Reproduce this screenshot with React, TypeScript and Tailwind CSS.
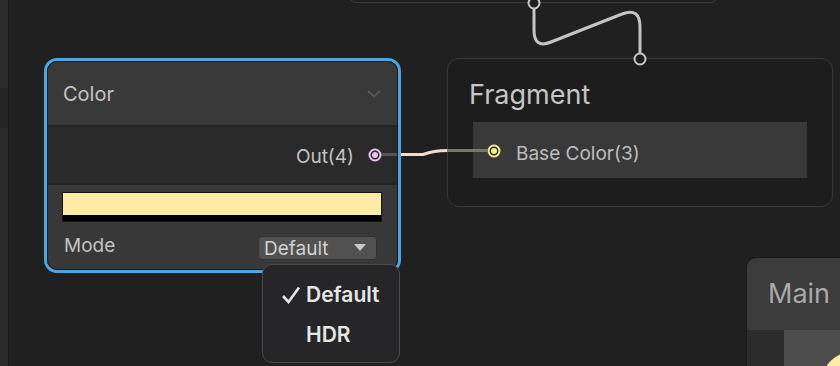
import type React from "react"

const font = { fontFamily: "Inter, 'Noto Sans', sans-serif" }

// small round port used on node rows
const Port: React.FC<{ color: string }> = ({ color }) => (
  <svg width="14" height="14" viewBox="0 0 14 14" className="shrink-0">
    <circle cx="7" cy="7" r="5.5" fill="#2a2a2a" stroke={color} strokeWidth="2" />
    <circle cx="7" cy="7" r="3" fill={color} />
  </svg>
)

const Wires: React.FC = () => (
  <svg width="840" height="366" className="absolute left-0 top-0 pointer-events-none">
    {/* vertical flow wire */}
    <path
      d="M534 9 L534 30 Q534 49 551 42 L622 14 Q640 7 640 27 L640 53"
      fill="none"
      stroke="#c4c4c4"
      strokeWidth="3"
    />
    <circle cx="534" cy="3" r="5.5" fill="#202020" stroke="#c8c8c8" strokeWidth="2" />
    <circle cx="640" cy="59" r="5.5" fill="#1e1e1e" stroke="#c8c8c8" strokeWidth="2" />
    {/* Out(4) -> Base Color(3) */}
    <path d="M401 154.5 L423 154.5 Q434 150.5 447 150.5" fill="none" stroke="#f1ddd0" strokeWidth="3" />
    <path d="M447 150.5 L488 150.5" fill="none" stroke="#7a7a62" strokeWidth="3" />
  </svg>
)

const App: React.FC = () => {
  return (
    <div className="relative w-[840px] h-[366px] overflow-hidden bg-[#202020]" style={font}>
      {/* left panel strip */}
      <div className="absolute left-0 top-0 h-full w-[9px] flex flex-col border-r border-[#1b1b1b]">
        <div className="h-[88px] bg-[#2c2c2c]" />
        <div className="h-[40px] bg-[#252525]" />
        <div className="flex-1 bg-[#2a2a2a]" />
      </div>

      {/* node above (cut off) */}
      <div className="absolute left-[347px] top-[-30px] w-[373px] h-[33px] rounded-[10px] border border-[#3a3a3a] bg-[#1e1e1e]" />

      {/* Fragment node */}
      <div className="absolute left-[447px] top-[58px] w-[386px] h-[149px] rounded-[12px] border border-[#3a3a3a] bg-[#1d1d1d] flex flex-col">
        <div className="h-[63px] pl-[21px] pt-[9px] flex items-center text-[27px] text-[#c6c6c6]">Fragment</div>
        <div className="mx-[25px] h-[56px] bg-[#393939] flex items-center gap-[15px] pl-[14px] pt-[1px]">
          <Port color="#f2f28e" />
          <span className="text-[19px] text-[#bdbdbd] pt-[7px]">Base Color(3)</span>
        </div>
      </div>

      {/* Color node (selected) */}
      <div className="absolute left-[44px] top-[58px] w-[357px] h-[215px] rounded-[13px] border-[3px] border-[#4ba6e6]">
        <div className="h-full w-full rounded-[10px] overflow-hidden flex flex-col border border-[#1c1c1c]">
          <div className="h-[63px] bg-[#393939] flex items-center justify-between pl-[15px] pr-[16px]">
            <span className="text-[20px] text-[#c4c4c4] pt-[1px]">Color</span>
            <svg width="14" height="8" viewBox="0 0 14 8">
              <path d="M1 1 L7 6.5 L13 1" fill="none" stroke="#555555" strokeWidth="2" />
            </svg>
          </div>
          <div className="h-[2px] bg-[#242424]" />
          <div className="h-[56px] bg-[#2a2a2a] flex items-center justify-end">
            <span className="text-[19px] text-[#c2c2c2] mr-[14px] pt-[5px]">Out(4)</span>
            <Port color="#edc3ee" />
            <div className="w-[15px] h-[3px] bg-[#555555] mt-[-1px]" />
          </div>
          <div className="h-[2px] bg-[#242424]" />
          <div className="flex-1 bg-[#383838] pl-[14px] pr-[20px] pt-[7px] flex flex-col">
            <div className="h-[30px] w-[320px] border border-[#151515] bg-black flex flex-col">
              <div className="h-[22px] bg-[#ffeba6]" />
            </div>
            <div className="mt-[13px] flex items-center justify-between">
              <span className="text-[19px] text-[#c2c2c2] pl-[2px] mt-[-3px]">Mode</span>
              <div className="w-[119px] h-[24px] rounded-[4px] bg-[#515151] border border-[#303030] flex items-center justify-between pl-[5px] pr-[10px]">
                <span className="text-[19px] leading-none text-[#d2d2d2] pt-[1px]">Default</span>
                <svg width="12" height="7" viewBox="0 0 12 7">
                  <path d="M0 0 L12 0 L6 7 Z" fill="#c8c8c8" />
                </svg>
              </div>
            </div>
          </div>
        </div>
      </div>

      {/* Main node (cut off) */}
      <div className="absolute left-[746px] top-[257px] w-[110px] h-[120px] rounded-tl-[10px] overflow-hidden border-l border-t border-[#1a1a1a] flex flex-col">
        <div className="h-[72px] bg-[#3c3c3c] flex items-center pl-[21px] text-[27px] text-[#a9a9a9]">Main</div>
        <div className="flex-1 flex">
          <div className="w-[37px] bg-[#2c2c2c]" />
          <div className="flex-1 bg-[#4d4d4d] relative overflow-hidden">
            <div className="absolute left-[38px] top-[22px] w-[60px] h-[60px] rounded-full bg-[#ffeba6]" />
          </div>
        </div>
      </div>

      <Wires />

      {/* dropdown menu */}
      <div className="absolute left-[262px] top-[264px] w-[138px] h-[99px] rounded-[10px] border border-[#4c4c4c] bg-[#262628] flex flex-col pt-[14px] text-[21px] font-semibold text-[#e6e6e6]">
        <div className="h-[32px] flex items-center">
          <span className="w-[43px] flex justify-end pr-[5px]">
            <svg width="20" height="18" viewBox="0 0 20 18">
              <path d="M2 10 L7.5 16 L18 1.5" fill="none" stroke="#e6e6e6" strokeWidth="2.6" />
            </svg>
          </span>
          <span>Default</span>
        </div>
        <div className="h-[40px] flex items-center pl-[43px] pt-[8px]">HDR</div>
      </div>
    </div>
  )
}

export default App
